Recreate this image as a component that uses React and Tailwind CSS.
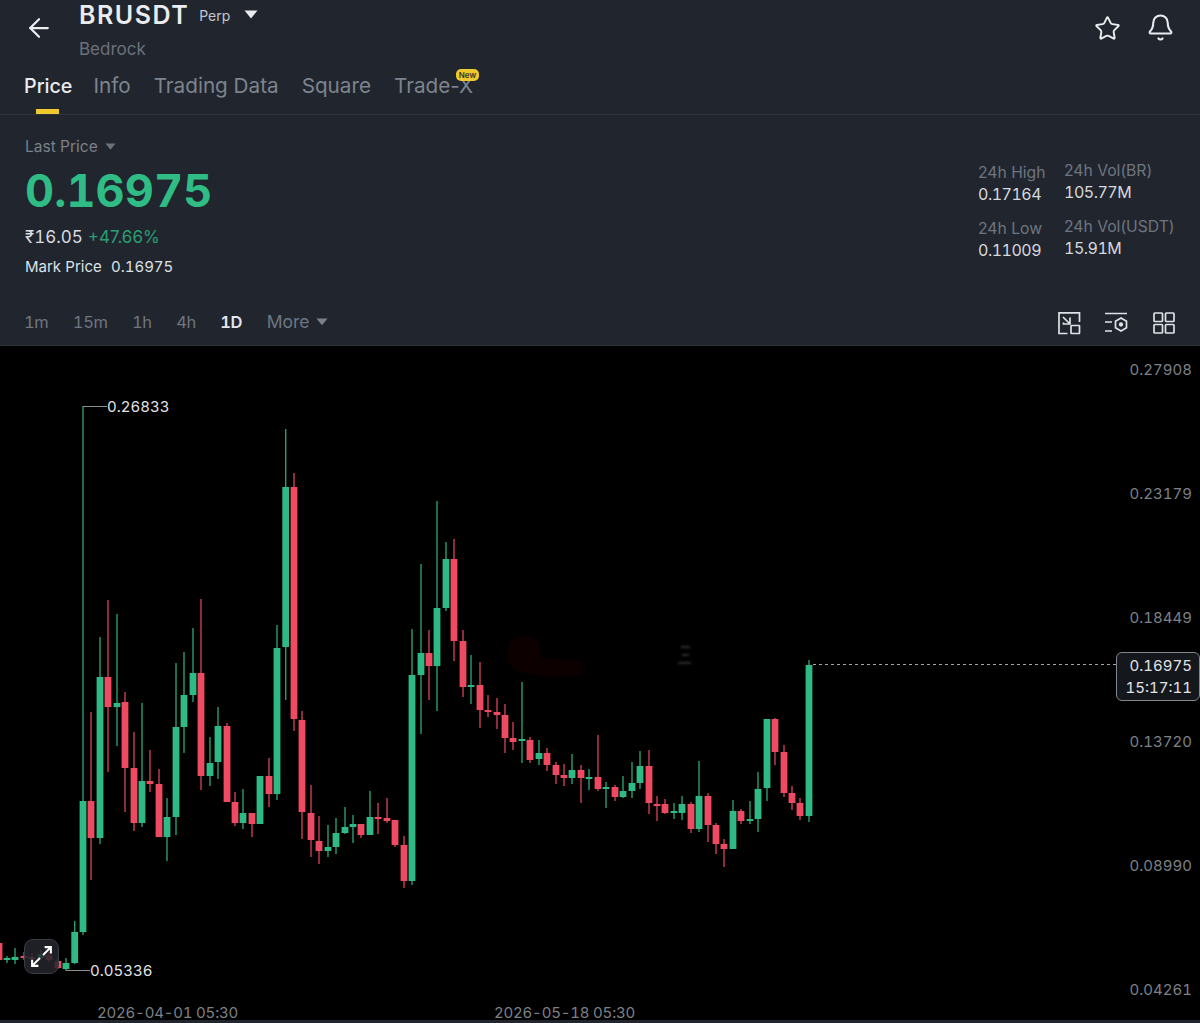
import { ArrowLeft, Bell, Star } from 'lucide-react';

// [center x, body top, body bottom, wick top, wick bottom, up?]  all in page px
const candles = [
  [-1, 943, 960, 943, 960, 0], [7, 958, 960, 956, 963, 1], [15, 957, 960, 948, 964, 1], [24, 956, 958, 952, 960, 0],
  [32, 957, 959, 953, 962, 0], [41, 954, 958, 950, 960, 1], [49, 955, 960, 952, 962, 0], [58, 961, 968, 958, 969, 0],
  [66, 963, 969, 958, 971, 1], [74.7, 932, 963, 921, 964, 1], [83, 801, 932, 406, 935, 1], [91, 801, 838, 712, 880, 0],
  [100, 677, 838, 637, 844, 1], [108, 677, 707, 600, 772, 0], [117, 703, 707, 614, 746, 1], [125, 702, 768, 692, 812, 0],
  [134, 768, 823, 732, 831, 0], [142, 781, 823, 703, 827, 1], [150, 781, 784, 750, 792, 0], [159, 784, 837, 769, 837, 0],
  [167, 817, 837, 798, 861, 1], [176, 727, 817, 663, 835, 1], [184, 695, 727, 652, 753, 1], [193, 673, 695, 628, 702, 1],
  [201, 673, 776, 599, 790, 0], [210, 763, 776, 737, 786, 1], [218, 726, 762, 707, 779, 1], [227, 726, 802, 723, 802, 0],
  [235, 802, 823, 792, 826, 0], [243, 813, 823, 789, 829, 1], [252, 813, 824, 813, 837, 0], [260, 776, 824, 776, 824, 1],
  [269, 776, 794, 758, 807, 0], [277, 648, 794, 625, 800, 1], [285.7, 487, 647, 429, 700, 1], [294, 487, 719, 473, 731, 0],
  [302, 720, 812, 711, 839, 0], [311, 813, 840, 785, 857, 0], [319, 841, 851, 816, 864, 0], [328, 847, 851, 825, 857, 1],
  [336, 833, 847, 818, 854, 1], [345, 827, 833, 807, 834, 1], [353, 824, 827, 815, 843, 1], [361, 824, 835, 824, 838, 0],
  [370, 817, 835, 791, 835, 1], [378, 817, 819, 803, 834, 0], [387, 818, 821, 798, 823, 0], [395, 820, 845, 820, 847, 0],
  [404, 845, 881, 836, 888, 0], [412, 675, 881, 629, 885, 1], [421, 653, 675, 564, 734, 1], [429, 653, 666, 630, 700, 0],
  [437, 608, 666, 501, 711, 1], [446, 559, 608, 542, 611, 1], [454, 559, 641, 539, 661, 0], [463, 641, 687, 630, 697, 0],
  [471, 685, 687, 655, 704, 1], [480, 685, 710, 662, 728, 0], [488, 710, 712, 695, 717, 0], [497, 712, 715, 698, 729, 0],
  [505, 715, 738, 704, 753, 0], [513, 738, 742, 722, 750, 0], [522, 739, 741, 682, 763, 1], [530, 740, 760, 737, 763, 0],
  [539, 753, 759, 740, 765, 1], [547, 753, 765, 748, 771, 0], [556, 765, 775, 762, 784, 0], [564, 775, 778, 764, 786, 0],
  [572, 770, 778, 754, 784, 1], [581, 770, 778, 765, 803, 0], [589, 777, 779, 769, 790, 1], [598, 777, 789, 735, 791, 0],
  [606, 787, 789, 782, 808, 1], [615, 787, 797, 785, 801, 0], [623, 791, 797, 776, 798, 1], [632, 783, 791, 762, 798, 1],
  [640, 766, 783, 751, 789, 1], [649, 766, 803, 750, 814, 0], [657, 804, 806, 796, 821, 0], [665, 804, 813, 799, 814, 0],
  [674, 811, 813, 803, 819, 1], [682, 804, 813, 796, 820, 1], [691, 804, 829, 802, 833, 0], [699, 796, 829, 761, 832, 1],
  [708, 796, 825, 793, 842, 0], [716, 825, 844, 823, 854, 0], [724, 844, 849, 839, 867, 0], [733, 811, 849, 800, 849, 1],
  [741, 811, 821, 809, 824, 0], [750, 819, 821, 801, 824, 1], [758, 789, 819, 772, 832, 1], [767, 719, 788, 719, 801, 1],
  [775, 719, 752, 718, 765, 0], [784, 752, 793, 745, 797, 0], [792, 793, 803, 786, 810, 0], [800, 803, 816, 798, 820, 0],
  [809, 665, 816, 660, 822, 1],
];

const tabs = ['Info', 'Trading Data', 'Square'];
const intervals = ['1m', '15m', '1h', '4h'];
const axis = ['0.27908', '0.23179', '0.18449', '0.13720', '0.08990', '0.04261'];

function Caret({ className }) {
  return (
    <svg viewBox="0 0 14 9" className={className} fill="currentColor" aria-hidden="true">
      <path d="M0.5 0.5h13L7 8.5z" />
    </svg>
  );
}

function Stat({ label, value }) {
  return (
    <div>
      <p className="h-[22px] translate-y-[1px] text-[15.7px] leading-[22px] text-[#6f7580]">{label}</p>
      <p className="h-[22px] text-[16px] leading-[22px] tracking-[-0.5px] tabular-nums text-[#d5d8dd]">{value}</p>
    </div>
  );
}

function CandleChart() {
  return (
    <svg viewBox="0 346 1200 677" className="absolute inset-0 h-full w-full" aria-hidden="true">
      <defs>
        <filter id="smudge"><feGaussianBlur stdDeviation="8" /></filter>
        <filter id="soft"><feGaussianBlur stdDeviation="0.8" /></filter>
      </defs>
      <g filter="url(#smudge)" fill="#070505">
        <ellipse cx="524" cy="654" rx="18" ry="20" />
        <ellipse cx="556" cy="668" rx="36" ry="10" />
      </g>
      <g fill="#2e2e30" filter="url(#soft)">
        <rect x="681" y="646" width="9" height="2" />
        <rect x="682" y="654" width="7" height="2" />
        <rect x="678" y="662" width="13" height="2" />
      </g>
      {candles.map(([x, top, bottom, wickTop, wickBottom, up]) => {
        const color = up ? '#2fb985' : '#ee4a62';
        return (
          <g key={x} fill={color}>
            <rect x={x - 0.7} y={wickTop} width="1.4" height={wickBottom - wickTop} opacity="0.85" />
            <rect x={x - 3.4} y={top} width="6.8" height={bottom - top} />
          </g>
        );
      })}
      <path d="M83 406.5h24" stroke="#8b8e94" fill="none" />
      <path d="M66 970.5h24" stroke="#8b8e94" fill="none" />
      <path d="M813 664.5h303" stroke="#a3a5a9" strokeDasharray="3 3" fill="none" />
    </svg>
  );
}

export default function App() {
  return (
    <div className="flex h-[1023px] w-[1200px] flex-col overflow-hidden bg-black font-['Inter',sans-serif]">
      <header className="h-[346px] shrink-0 border-b border-[#2c3037] bg-[#20252e]">
        <div className="flex h-[68px] pr-[25px]">
          <ArrowLeft size={30} strokeWidth={1.8} className="ml-6 mt-[13px] text-[#eaecef]" />
          <div className="ml-[25px] flex-1">
            <div className="flex h-[30px] items-center">
              <span className="text-[25px] font-semibold leading-[30px] tracking-[1.5px] text-[#eaecef]">BRUSDT</span>
              <span className="ml-[10px] text-[14px] text-[#c3c7cd]">Perp</span>
              <Caret className="ml-[14px] mb-[2px] w-[14px] text-[#eaecef]" />
            </div>
            <p className="mt-[8px] text-[17px] leading-[22px] text-[#6c717b]">Bedrock</p>
          </div>
          <Star size={27} strokeWidth={1.7} className="mt-[15px] translate-x-[1px] text-[#eaecef]" />
          <Bell size={29} strokeWidth={1.7} className="ml-[26px] mt-[13px] text-[#eaecef]" />
        </div>

        <nav className="flex h-[47px] items-start gap-[23px] border-b border-[#2f343c] pl-6 pt-[4px] text-[20.7px] leading-[28px] text-[#7e848d]">
          <div className="relative mr-[-2px] text-[19.7px] font-medium text-[#eaecef]">
            Price
            <span className="absolute left-[12px] top-[37px] h-[5px] w-[23px] bg-[#f0c92f]" />
          </div>
          {tabs.map((tab) => (
            <span key={tab}>{tab}</span>
          ))}
          <div className="relative">
            Trade-X
            <span className="absolute right-[-6px] top-[-3px] rounded-[5px] bg-[#f0c92f] px-[3px] text-[8px] font-semibold leading-[12px] text-[#3a3420]">
              New
            </span>
          </div>
        </nav>

        <div className="flex h-[196px] justify-between pl-[25px] pt-[22px]">
          <div>
            <div className="flex h-5 items-center gap-[7px] text-[15.5px] text-[#7c8089]">
              Last Price
              <Caret className="w-[11px] text-[#6d7178]" />
            </div>
            <p className="mt-[9px] h-[50px] text-[45px] font-bold leading-[50px] tracking-[0.1px] tabular-nums text-[#2fbd85]">0.16975</p>
            <p className="mt-[11px] h-5 text-[17px] leading-5 text-[#d9dce0]">
              <span className="tabular-nums">₹16.05</span> <span className="text-[#2b9f74]">+47.66%</span>
            </p>
            <p className="mt-[10px] h-5 text-[15px] leading-5 text-[#dfe2e6]">
              Mark Price <span className="ml-[5px] tabular-nums">0.16975</span>
            </p>
          </div>
          <div className="flex">
            <div className="w-[86px] pt-[24px]">
              <Stat label="24h High" value="0.17164" />
              <div className="mt-3">
                <Stat label="24h Low" value="0.11009" />
              </div>
            </div>
            <div className="w-[136px] pt-[22px]">
              <Stat label="24h Vol(BR)" value="105.77M" />
              <div className="mt-3">
                <Stat label="24h Vol(USDT)" value="15.91M" />
              </div>
            </div>
          </div>
        </div>

        <div className="flex h-[35px] items-start justify-between pl-6 pr-[24px] pt-[1px] text-[16.5px] leading-5 text-[#6f7580]">
          <div className="flex items-center gap-[24.5px] tracking-[-0.4px] tabular-nums">
            {intervals.map((item) => (
              <span key={item}>{item}</span>
            ))}
            <span className="font-semibold text-[#e3e6ea]">1D</span>
            <span className="flex items-center gap-[7px] text-[17.5px] tracking-normal">
              More <Caret className="w-[12px] text-[#7c8089]" />
            </span>
          </div>
          <div className="flex items-center gap-[24px] text-[#dfe2e6]">
            <svg viewBox="0 0 24 24" className="h-[24px] w-[24px] translate-x-[1px] -translate-y-[1px]" fill="none" stroke="currentColor" strokeWidth="1.7" aria-hidden="true">
              <path d="M10.5 22.5H2V1.8h20.5V11" />
              <rect x="14" y="14.5" width="8.5" height="8" rx="0.5" />
              <path d="M6 6l6.5 6.5M6.5 11.5v1.5h6.5V6.5" />
            </svg>
            <svg viewBox="0 0 24 24" className="h-[24px] w-[24px] -translate-y-[1px]" fill="none" stroke="currentColor" strokeWidth="1.7" aria-hidden="true">
              <path d="M1 2.5h22M1 11h7M1 20h7" />
              <path d="M17 7l5.5 3.2v6.6L17 20l-5.5-3.2v-6.6z" />
              <circle cx="17" cy="13.5" r="1.3" fill="currentColor" />
            </svg>
            <svg viewBox="0 0 24 24" className="h-[24px] w-[24px] -translate-y-[1px]" fill="none" stroke="currentColor" strokeWidth="1.7" aria-hidden="true">
              <rect x="2" y="2" width="8.5" height="8.5" rx="0.8" />
              <rect x="13.5" y="2" width="8.5" height="8.5" rx="0.8" />
              <rect x="2" y="13.5" width="8.5" height="8.5" rx="0.8" />
              <rect x="13.5" y="13.5" width="8.5" height="8.5" rx="0.8" />
            </svg>
          </div>
        </div>
      </header>

      <main className="relative flex-1 overflow-hidden bg-black text-[15px] tabular-nums">
        <CandleChart />

        <div className="absolute right-2 top-[14px] flex flex-col items-end gap-[104px] leading-5 text-[#7d8087]">
          {axis.map((price) => (
            <span key={price}>{price}</span>
          ))}
        </div>

        <span className="absolute left-[107px] top-[51px] leading-5 text-[#e2e3e5]">0.26833</span>
        <span className="absolute left-[90px] top-[615px] leading-5 text-[#e2e3e5]">0.05336</span>

        <div className="absolute left-[1116px] top-[306px] flex h-[49px] w-[84px] flex-col items-end justify-center rounded-[6px] border border-[#83868c] bg-[#14171c] pr-[7px] leading-[22px] text-[#e2e3e5]">
          <span>0.16975</span>
          <span>15:17:11</span>
        </div>

        <button className="absolute left-6 top-[593px] flex h-[35px] w-[35px] items-center justify-center rounded-[9px] border border-[#3a3d44] bg-[#24262d]/85 text-white">
          <svg viewBox="0 0 24 24" className="h-[25px] w-[25px]" fill="none" stroke="currentColor" strokeWidth="2" aria-hidden="true">
            <path d="M3 21l7.5-7.5M13.5 10.5L21 3M15 3h6v6M3 15v6h6" />
          </svg>
        </button>

        <div className="absolute bottom-0 left-0 w-full">
          <span className="absolute bottom-0 left-[97px] leading-5 tracking-[-0.2px] text-[#7d8087]">2026-04-01 05:30</span>
          <span className="absolute bottom-0 left-[494px] leading-5 tracking-[-0.2px] text-[#7d8087]">2026-05-18 05:30</span>
        </div>
        <div className="absolute bottom-0 left-0 h-[3px] w-full bg-[#20252e]" />
      </main>
    </div>
  );
}
